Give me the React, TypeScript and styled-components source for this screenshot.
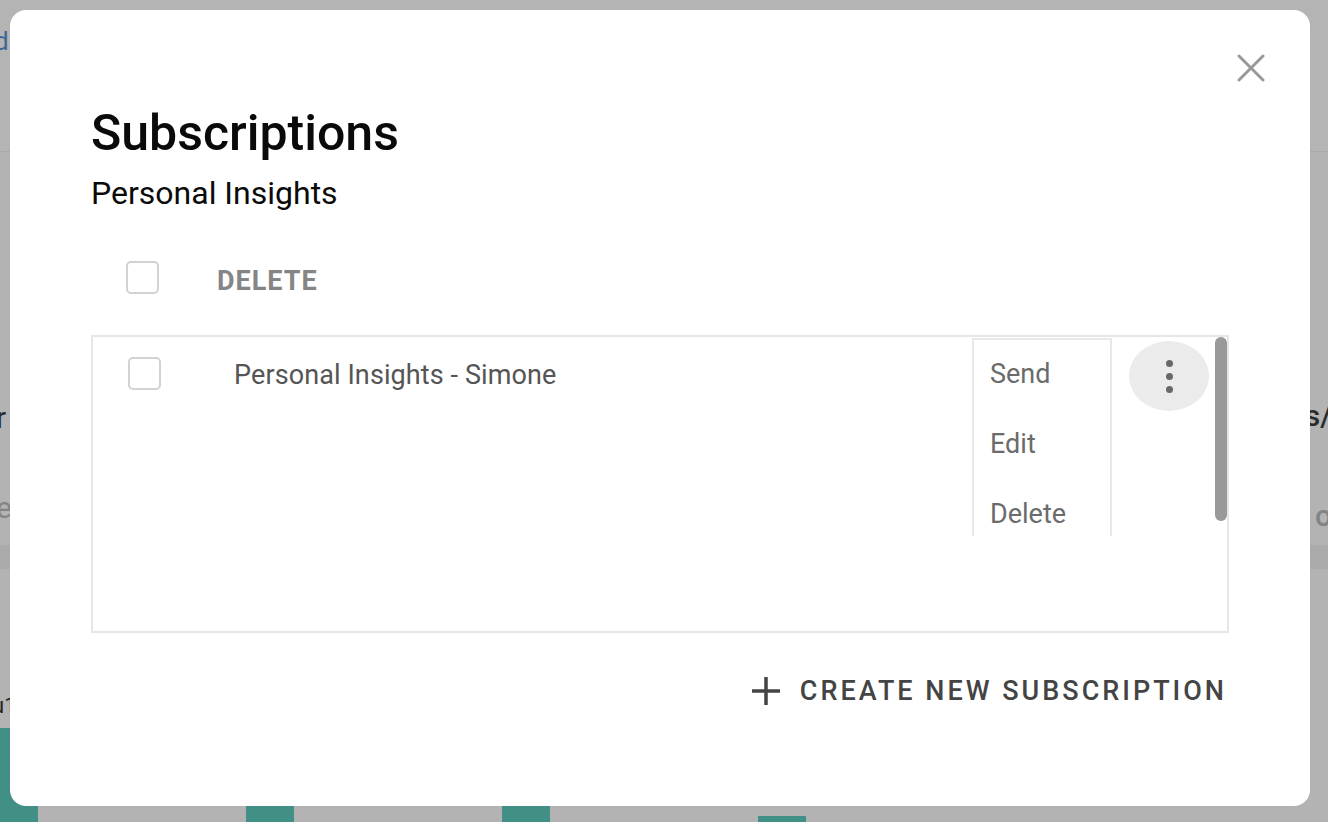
import React from 'react';
import styled, { createGlobalStyle } from 'styled-components';

const GlobalStyle = createGlobalStyle`
  html, body {
    margin: 0;
    padding: 0;
    overflow: hidden;
  }
  body {
    font-family: Roboto, 'Noto Sans', Arial, sans-serif;
  }
`;

const chartBars = [
  { offset: 0, width: 38, height: 94 },
  { offset: 208, width: 48, height: 16 },
  { offset: 208, width: 48, height: 16 },
  { offset: 208, width: 48, height: 6 },
];

const menuItems = ['Send', 'Edit', 'Delete'];

const App = () => {
  return (
    <>
      <GlobalStyle />
      <Page>
        <PageHeader>
          <HeaderLink>d</HeaderLink>
        </PageHeader>
        <PageBody>
          <SideText $top={248}>r</SideText>
          <SideText $top={338} $muted>e</SideText>
          <RightText $top={246}>s/</RightText>
          <RightText $top={346} $muted>o</RightText>
        </PageBody>
        <PageBand />
        <ChartArea>
          <ChartLabel>u1</ChartLabel>
          <Bars>
            {chartBars.map((bar, index) => (
              <Bar
                key={`bar-${index}`}
                style={{ marginLeft: bar.offset, width: bar.width, height: bar.height }}
              />
            ))}
          </Bars>
        </ChartArea>
      </Page>

      <Modal>
        <CloseButton aria-label="close">
          <svg width="28" height="28" viewBox="0 0 28 28">
            <path d="M2 2 L26 26 M26 2 L2 26" stroke="#999" strokeWidth="3" strokeLinecap="round" />
          </svg>
        </CloseButton>
        <Title>Subscriptions</Title>
        <SubTitle>Personal Insights</SubTitle>

        <HeaderRow>
          <Checkbox />
          <DeleteLabel>DELETE</DeleteLabel>
        </HeaderRow>

        <ListBox>
          <ListContent>
            <Row>
              <RowCheckbox />
              <RowTitle>Personal Insights - Simone</RowTitle>
              <KebabButton aria-label="more">
                <Dot />
                <Dot />
                <Dot />
              </KebabButton>
            </Row>
            <Menu>
              {menuItems.map((item) => (
                <MenuItem key={item}>{item}</MenuItem>
              ))}
            </Menu>
          </ListContent>
          <ScrollThumb />
        </ListBox>

        <Footer>
          <CreateButton>
            <svg width="28" height="28" viewBox="0 0 28 28">
              <path d="M14 0 V28 M0 14 H28" stroke="#444" strokeWidth="3.5" />
            </svg>
            <span>CREATE NEW SUBSCRIPTION</span>
          </CreateButton>
        </Footer>
      </Modal>
    </>
  );
};

const Page = styled.div`
  width: 1328px;
  height: 822px;
  background: #b3b3b3;
  display: flex;
  flex-direction: column;
  overflow: hidden;
`;

const PageHeader = styled.div`
  height: 152px;
  background: #b4b4b4;
  border-bottom: 1px solid #a9a9a9;
  padding-top: 26px;
  box-sizing: border-box;
`;

const HeaderLink = styled.div`
  font-size: 26px;
  color: #3f6796;
  margin-left: -6px;
`;

const PageBody = styled.div`
  height: 393px;
  position: relative;
`;

const SideText = styled.div<{ $top: number; $muted?: boolean }>`
  position: absolute;
  top: ${({ $top }) => $top}px;
  left: -4px;
  font-size: 30px;
  color: ${({ $muted }) => ($muted ? '#848484' : '#2a2a2a')};
`;

const RightText = styled(SideText)`
  left: auto;
  right: -4px;
  font-weight: 500;
`;

const PageBand = styled.div`
  height: 24px;
  background: #aaaaaa;
`;

const ChartArea = styled.div`
  flex: 1;
  display: flex;
  flex-direction: column;
  justify-content: space-between;
`;

const ChartLabel = styled.div`
  margin-top: 124px;
  margin-left: -8px;
  font-size: 22px;
  color: #222;
`;

const Bars = styled.div`
  display: flex;
  align-items: flex-end;
`;

const Bar = styled.div`
  background: #428f85;
`;

const Modal = styled.div`
  position: fixed;
  left: 10px;
  top: 10px;
  width: 1300px;
  height: 796px;
  background: #fff;
  border-radius: 16px;
  padding: 94px 81px 0;
  box-sizing: border-box;
`;

const CloseButton = styled.button`
  position: absolute;
  top: 44px;
  right: 45px;
  width: 28px;
  height: 28px;
  padding: 0;
  border: none;
  background: none;
  display: flex;
`;

const Title = styled.h2`
  margin: 0;
  font-size: 50px;
  line-height: 58px;
  font-weight: 500;
  color: #0a0a0a;
`;

const SubTitle = styled.div`
  font-size: 32px;
  line-height: 40px;
  color: #0a0a0a;
  margin-top: 11px;
`;

const HeaderRow = styled.div`
  display: flex;
  align-items: center;
  height: 34px;
  margin-top: 47px;
  padding-left: 35px;
`;

const Checkbox = styled.span`
  width: 33px;
  height: 33px;
  box-sizing: border-box;
  border: 2px solid #d2d2d2;
  border-radius: 5px;
  flex-shrink: 0;
`;

const DeleteLabel = styled.span`
  margin-left: 58px;
  margin-top: 8px;
  font-size: 27px;
  font-weight: 700;
  letter-spacing: 1px;
  color: #858585;
`;

const ListBox = styled.div`
  margin-top: 41px;
  height: 298px;
  border: 2px solid #e6e6e6;
  box-sizing: border-box;
  display: flex;
  overflow: hidden;
`;

const ListContent = styled.div`
  flex: 1;
  position: relative;
`;

const Row = styled.div`
  display: flex;
  align-items: flex-start;
  padding: 4px 6px 0 35px;
`;

const RowCheckbox = styled(Checkbox)`
  margin-top: 16px;
`;

const RowTitle = styled.span`
  margin-left: 73px;
  margin-top: 17px;
  font-size: 27px;
  line-height: 34px;
  letter-spacing: 0.1px;
  color: #555;
`;

const KebabButton = styled.button`
  margin-left: auto;
  width: 80px;
  height: 70px;
  border-radius: 50%;
  border: none;
  background: #ebebeb;
  display: flex;
  flex-direction: column;
  align-items: center;
  justify-content: center;
  gap: 6px;
  padding: 0;
`;

const Dot = styled.span`
  width: 7px;
  height: 7px;
  border-radius: 50%;
  background: #686868;
`;

const Menu = styled.div`
  position: absolute;
  top: 1px;
  left: 879px;
  width: 140px;
  height: 198px;
  box-sizing: border-box;
  border: 2px solid #e8e8e8;
  border-bottom: none;
  background: #fff;
  overflow: hidden;
`;

const MenuItem = styled.div`
  height: 70px;
  display: flex;
  align-items: center;
  padding-left: 16px;
  padding-bottom: 2px;
  box-sizing: border-box;
  font-size: 27px;
  color: #6b6b6b;
  flex-shrink: 0;
`;

const ScrollThumb = styled.div`
  width: 12px;
  height: 184px;
  border-radius: 6px;
  background: #999;
`;

const Footer = styled.div`
  display: flex;
  justify-content: flex-end;
  margin-top: 34px;
`;

const CreateButton = styled.button`
  display: flex;
  align-items: center;
  gap: 20px;
  height: 48px;
  padding: 0 2px 0 0;
  border: none;
  background: none;
  font-family: Roboto, 'Noto Sans', Arial, sans-serif;
  font-size: 27px;
  font-weight: 500;
  letter-spacing: 3px;
  color: #444;
`;

export default App;
